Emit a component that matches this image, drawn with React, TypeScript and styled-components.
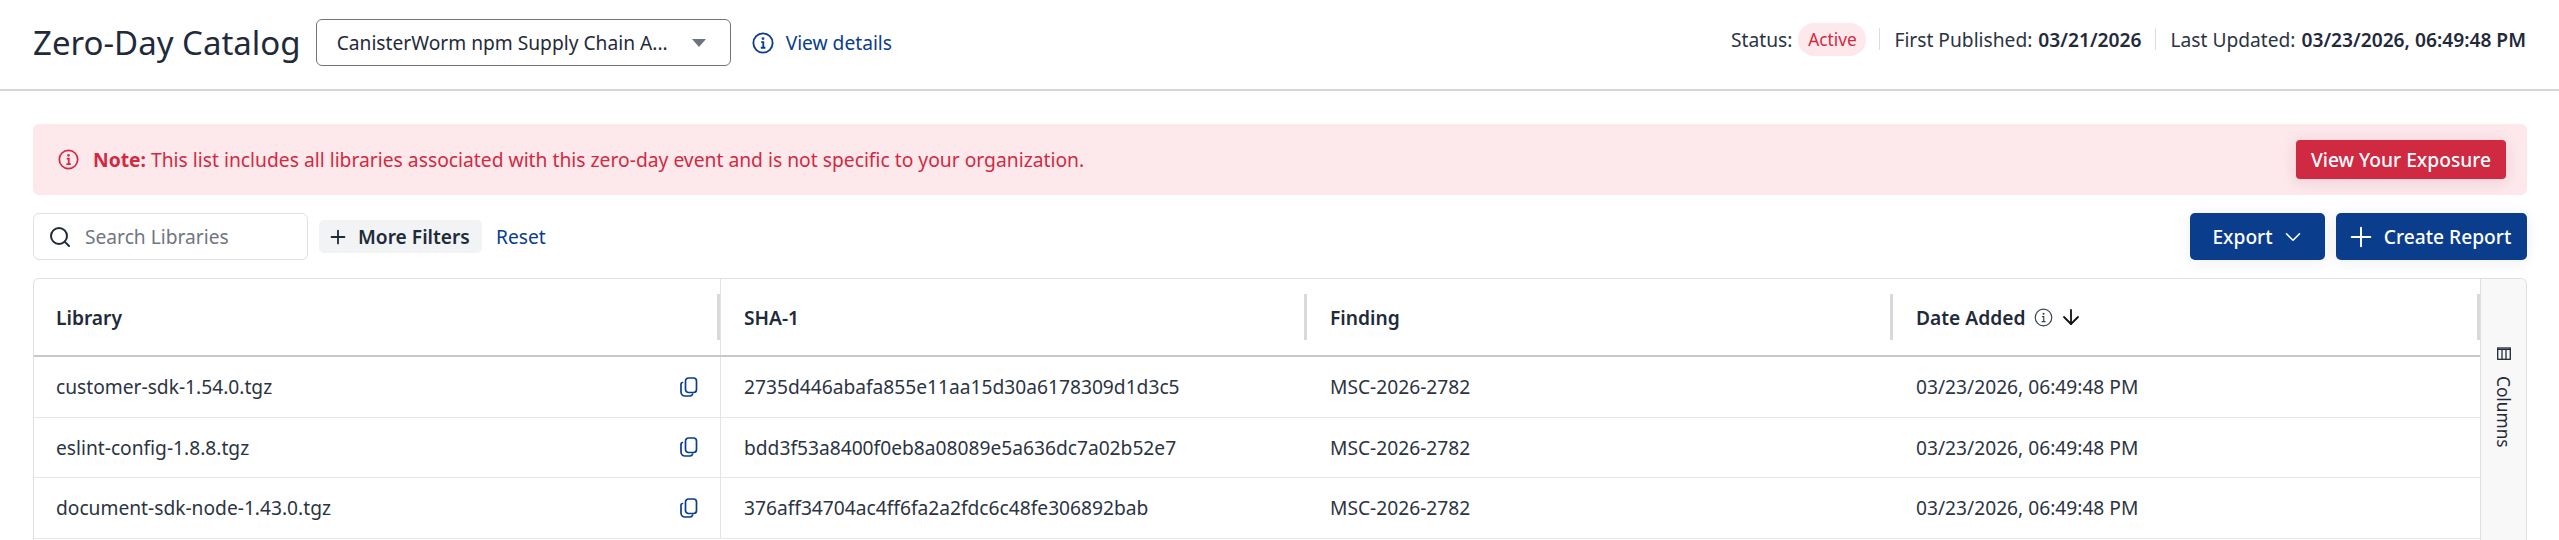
import { createGlobalStyle, styled } from "styled-components";
import { ArrowDown, ChevronDown, Plus, Search } from "lucide-react";

const GlobalStyle = createGlobalStyle`
  html, body {
    margin: 0;
    height: 540px;
    overflow: hidden;
    background: #fff;
    font-family: "Noto Sans", sans-serif;
    color: #1f2a3a;
  }
  * { box-sizing: border-box; }
`;

const TopBar = styled.header`
  height: 91px;
  padding: 0 33px;
  border-bottom: 2px solid #d6d6d6;
  display: flex;
  align-items: center;
  justify-content: space-between;
`;

const TitleGroup = styled.div`
  margin-top: -4px;
  display: flex;
  align-items: center;
`;

const Title = styled.h1`
  margin: 0 15px 0 0;
  font-size: 33px;
  font-weight: 400;
  color: #1f2a3a;
`;

const Select = styled.div`
  width: 415px;
  height: 47px;
  padding: 0 24px 0 20px;
  border: 1px solid #70757c;
  border-radius: 6px;
  display: flex;
  align-items: center;
  justify-content: space-between;
  font-size: 19.2px;
`;

const Caret = styled.span`
  width: 0;
  height: 0;
  border-left: 7.5px solid transparent;
  border-right: 7.5px solid transparent;
  border-top: 8px solid #6b7480;
`;

const DetailsLink = styled.a`
  margin-left: 21px;
  display: flex;
  align-items: center;
  gap: 12px;
  font-size: 19.2px;
  color: #0a3d8c;
`;

const MetaGroup = styled.div`
  margin-top: -11px;
  display: flex;
  align-items: center;
  font-size: 19.2px;
  color: #2b3442;
`;

const MetaItem = styled.div`
  display: flex;
  align-items: center;
  padding: 0 14px;
  border-left: 1px solid #dcdcdc;
  height: 22px;

  &:first-child {
    border-left: none;
    padding: 0 13px 0 0;
  }
  &:last-child {
    padding-right: 0;
  }

  b {
    font-weight: 600;
    margin-left: 6px;
    color: #1f2a3a;
  }
`;

const Badge = styled.span`
  margin-left: 6px;
  width: 68px;
  height: 33px;
  border-radius: 16px;
  background: #fde8eb;
  color: #d02a43;
  font-size: 17.28px;
  display: flex;
  align-items: center;
  justify-content: center;
`;

const Content = styled.main`
  padding: 33px 32px 0 33px;
`;

const Alert = styled.section`
  height: 71px;
  padding: 0 21px 0 25px;
  border-radius: 6px;
  background: #fde8eb;
  display: flex;
  align-items: center;
  justify-content: space-between;
  color: #d02a43;
  font-size: 19.28px;
`;

const AlertText = styled.div`
  display: flex;
  align-items: center;
  gap: 14px;

  b {
    font-weight: 700;
  }
`;

const DangerButton = styled.button`
  width: 210px;
  height: 39px;
  border: none;
  border-radius: 4px;
  background: #d02a43;
  color: #fff;
  font: 500 19.2px "Noto Sans", sans-serif;
  box-shadow: 0 2px 14px rgba(120, 40, 60, 0.15);
`;

const Toolbar = styled.div`
  margin-top: 18px;
  height: 47px;
  display: flex;
  align-items: center;
  justify-content: space-between;
`;

const FilterGroup = styled.div`
  display: flex;
  align-items: center;
`;

const SearchBox = styled.div`
  width: 275px;
  height: 47px;
  padding-left: 14px;
  border: 1px solid #e0e0e0;
  border-radius: 6px;
  display: flex;
  align-items: center;
  gap: 13px;
  font-size: 19.2px;
  color: #6f7680;
`;

const FilterButton = styled.button`
  margin-left: 11px;
  width: 163px;
  height: 33px;
  padding: 0 0 0 8px;
  border: none;
  border-radius: 5px;
  background: #f2f3f5;
  display: flex;
  align-items: center;
  gap: 9px;
  font: 600 19.2px "Noto Sans", sans-serif;
  color: #1f2a3a;
`;

const ResetLink = styled.a`
  margin-left: 14px;
  font-size: 19.2px;
  color: #0a3d8c;
`;

const ActionGroup = styled.div`
  display: flex;
  gap: 11px;
`;

const PrimaryButton = styled.button<{ $width: number }>`
  width: ${(p) => p.$width}px;
  height: 47px;
  padding: 0;
  border: none;
  border-radius: 5px;
  background: #0a3d8c;
  color: #fff;
  display: flex;
  align-items: center;
  justify-content: center;
  gap: 7px;
  font: 500 19.2px "Noto Sans", sans-serif;
  box-shadow: 0 2px 14px rgba(30, 40, 60, 0.08);
`;

const ExportChevron = styled(ChevronDown)`
  margin-right: -3px;
`;

const CreatePlus = styled(Plus)`
  margin-left: -7px;
`;

const TableFrame = styled.section`
  margin-top: 18px;
  height: 262px;
  border: 1px solid #e0e0e0;
  border-bottom: none;
  border-radius: 6px 6px 0 0;
  display: flex;
  overflow: hidden;
`;

const TableBody = styled.div`
  flex: 1;
  min-width: 0;
`;

const HeadRow = styled.div`
  height: 78px;
  border-bottom: 2px solid #c9c9c9;
  display: grid;
  grid-template-columns: 687px 586px 586px 587px;
`;

const HeadCell = styled.div`
  position: relative;
  padding-left: 23px;
  display: flex;
  align-items: center;
  gap: 9px;
  font-size: 19.2px;
  font-weight: 600;
  color: #1f2a3a;

  &:first-child {
    padding-left: 22px;
    border-right: 1px solid #e3e3e3;
  }

  &::after {
    content: "";
    position: absolute;
    right: 0;
    top: 15px;
    width: 3px;
    height: 46px;
    background: #d9d9d9;
  }
`;

const SortArrow = styled(ArrowDown)`
  margin-left: -3px;
`;

const HelpGlyph = styled.span`
  display: flex;
  color: #3a4656;
`;

const Row = styled.div`
  height: 60.5px;
  border-bottom: 1px solid #e6e6e6;
  display: grid;
  grid-template-columns: 687px 586px 586px 587px;
`;

const Cell = styled.div`
  padding-left: 23px;
  display: flex;
  align-items: center;
  font-size: 19.2px;
  color: #2b3442;
`;

const FileCell = styled(Cell)`
  padding: 0 22px;
  justify-content: space-between;
  border-right: 1px solid #e3e3e3;
`;

const ColumnsRail = styled.aside`
  width: 46px;
  padding-top: 68px;
  background: #f8f8f8;
  border-left: 1px solid #e0e0e0;
  display: flex;
  flex-direction: column;
  align-items: center;
  gap: 16px;
`;

const RailLabel = styled.span`
  writing-mode: vertical-rl;
  font-size: 17.28px;
  color: #1f2a3a;
`;

const InfoIcon = ({ size, weight = 2 }: { size: number; weight?: number }) => (
  <svg width={size} height={size} viewBox="0 0 24 24" fill="none" stroke="currentColor" strokeWidth={weight}>
    <circle cx="12" cy="12" r="10.5" />
    <path d="M10 11h2.3v6M9.6 17.2h5" />
    <circle cx="12" cy="7.2" r="0.6" fill="currentColor" />
  </svg>
);

const CopyIcon = () => (
  <svg width="18" height="20" viewBox="0 0 18 20" fill="none" stroke="#0a3d8c" strokeWidth="1.7">
    <rect x="5.5" y="1" width="11" height="14.5" rx="3" />
    <path d="M2.5 5.5a1.8 1.8 0 0 0-1.5 2v7.5a4 4 0 0 0 4 4h5a2.8 2.8 0 0 0 2.6-2" strokeLinecap="round" />
  </svg>
);

const ColumnsIcon = () => (
  <svg width="14" height="13" viewBox="0 0 14 13" fill="none" stroke="#1f2a3a" strokeWidth="1.3">
    <rect x="0.7" y="1" width="12.6" height="11.3" />
    <path d="M0.7 2.4h12.6M5 2.4V12.3M9 2.4V12.3" />
  </svg>
);

const rows = [
  ["customer-sdk-1.54.0.tgz", "2735d446abafa855e11aa15d30a6178309d1d3c5"],
  ["eslint-config-1.8.8.tgz", "bdd3f53a8400f0eb8a08089e5a636dc7a02b52e7"],
  ["document-sdk-node-1.43.0.tgz", "376aff34704ac4ff6fa2a2fdc6c48fe306892bab"],
];

export default function App() {
  return (
    <>
      <GlobalStyle />
      <TopBar>
        <TitleGroup>
          <Title>Zero-Day Catalog</Title>
          <Select>
            CanisterWorm npm Supply Chain A...
            <Caret />
          </Select>
          <DetailsLink>
            <InfoIcon size={22} />
            View details
          </DetailsLink>
        </TitleGroup>
        <MetaGroup>
          <MetaItem>
            Status:
            <Badge>Active</Badge>
          </MetaItem>
          <MetaItem>
            First Published: <b>03/21/2026</b>
          </MetaItem>
          <MetaItem>
            Last Updated: <b>03/23/2026, 06:49:48 PM</b>
          </MetaItem>
        </MetaGroup>
      </TopBar>
      <Content>
        <Alert>
          <AlertText>
            <InfoIcon size={21} />
            <span>
              <b>Note:</b> This list includes all libraries associated with this zero-day event and is
              not specific to your organization.
            </span>
          </AlertText>
          <DangerButton>View Your Exposure</DangerButton>
        </Alert>
        <Toolbar>
          <FilterGroup>
            <SearchBox>
              <Search size={24} color="#1f2a3a" />
              Search Libraries
            </SearchBox>
            <FilterButton>
              <Plus size={22} />
              More Filters
            </FilterButton>
            <ResetLink>Reset</ResetLink>
          </FilterGroup>
          <ActionGroup>
            <PrimaryButton $width={135}>
              Export
              <ExportChevron size={26} strokeWidth={1.5} />
            </PrimaryButton>
            <PrimaryButton $width={191}>
              <CreatePlus size={32} strokeWidth={1.5} />
              Create Report
            </PrimaryButton>
          </ActionGroup>
        </Toolbar>
        <TableFrame>
          <TableBody>
            <HeadRow>
              <HeadCell>Library</HeadCell>
              <HeadCell>SHA-1</HeadCell>
              <HeadCell>Finding</HeadCell>
              <HeadCell>
                Date Added
                <HelpGlyph>
                  <InfoIcon size={19} weight={1.5} />
                </HelpGlyph>
                <SortArrow size={24} strokeWidth={1.8} color="#111" />
              </HeadCell>
            </HeadRow>
            {rows.map(([file, sha]) => (
              <Row key={file}>
                <FileCell>
                  {file}
                  <CopyIcon />
                </FileCell>
                <Cell>{sha}</Cell>
                <Cell>MSC-2026-2782</Cell>
                <Cell>03/23/2026, 06:49:48 PM</Cell>
              </Row>
            ))}
          </TableBody>
          <ColumnsRail>
            <ColumnsIcon />
            <RailLabel>Columns</RailLabel>
          </ColumnsRail>
        </TableFrame>
      </Content>
    </>
  );
}
